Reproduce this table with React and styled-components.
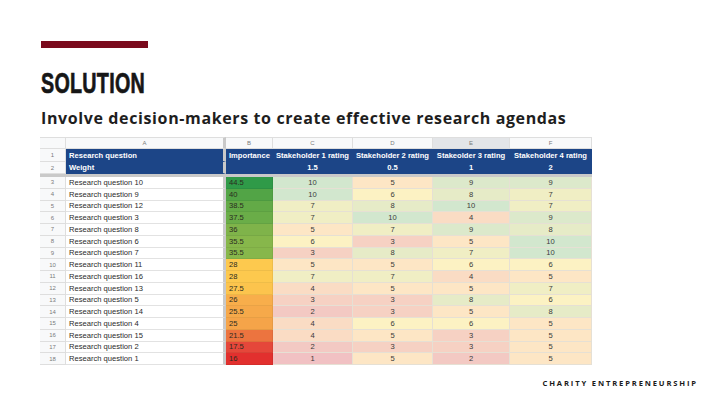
import React from "react";
import styled, { createGlobalStyle } from "styled-components";

const Global = createGlobalStyle`
  html, body { margin: 0; padding: 0; background: #ffffff; }
  body { width: 720px; height: 405px; overflow: hidden; }
`;

const Page = styled.div`
  width: 720px;
  height: 405px;
  box-sizing: border-box;
  padding: 41px 22px 0 40px;
  display: flex;
  flex-direction: column;
  background: #fff;
`;

const Bar = styled.div`
  width: 107px;
  height: 7px;
  margin-left: 1px;
  background: #7a0a1c;
`;

const Title = styled.h1`
  margin: 21px 0 0 1px;
  font-family: "Liberation Sans", sans-serif;
  font-weight: 700;
  font-size: 29px;
  line-height: 29px;
  letter-spacing: 0.4px;
  color: #161616;
  -webkit-text-stroke: 0.7px #161616;
  transform: scaleX(0.68);
  transform-origin: left center;
`;

const Subtitle = styled.h2`
  margin: 10px 0 0 1px;
  font-family: "Open Sans", sans-serif;
  font-weight: 700;
  font-size: 16px;
  line-height: 20px;
  letter-spacing: 0.62px;
  color: #1e1e1e;
`;

const Sheet = styled.div`
  margin-top: 9px;
  width: 552px;
  display: flex;
  flex-direction: column;
`;

const Row = styled.div`
  display: grid;
  box-sizing: border-box;
  grid-template-columns: 26px 160px 47px 80px 80px 77px 82px;
  height: ${(p) => p.$h}px;
  border-bottom: ${(p) => (p.$frozen ? "3px solid #c9c9c9" : "none")};
`;

const Cell = styled.div`
  box-sizing: border-box;
  min-width: 0;
  overflow: hidden;
  white-space: nowrap;
  display: flex;
  align-items: center;
  justify-content: ${(p) => (p.$align === "center" ? "center" : "flex-start")};
  padding: 0 3px;
  font-family: "Liberation Sans", Arial, sans-serif;
  font-size: 7.6px;
  font-weight: ${(p) => (p.$bold ? 700 : 400)};
  color: ${(p) => p.$color || "#2a2a2a"};
  background: ${(p) => p.$bg || "#ffffff"};
  border-right: ${(p) => (p.$sep ? "3px solid #c9c9c9" : `1px solid ${p.$line || "#e2e2e2"}`)};
  border-bottom: 1px solid ${(p) => p.$line || "#e2e2e2"};
`;

const HeadCell = styled(Cell)`
  justify-content: center;
  font-size: 6px;
  color: #7a7a7a;
  background: ${(p) => (p.$selected ? "#e3e5e8" : "#f8f9fa")};
  border-right: ${(p) => (p.$sep ? "3px solid #c9c9c9" : "1px solid #dedede")};
  border-bottom: 1px solid #dedede;
  border-top: ${(p) => (p.$top ? "1px solid #dedede" : "none")};
`;

const Footer = styled.div`
  margin-top: auto;
  margin-bottom: 17px;
  align-self: flex-end;
  font-family: "Open Sans", sans-serif;
  font-weight: 700;
  font-size: 7.6px;
  letter-spacing: 1.85px;
  color: #1a1a1a;
`;

const BLUE = "#1c4587";

const ratingColors = {
  10: "#d2e7ce",
  9: "#dce9cb",
  8: "#e6ebc7",
  7: "#f0eec4",
  6: "#fcf2c3",
  5: "#fde6c5",
  4: "#fadcc4",
  3: "#f6d1c3",
  2: "#f3c9c3",
  1: "#f1c1c3",
};

const rows = [
  ["Research question 10", "44.5", "#2f9a48", 10, 5, 9, 9],
  ["Research question 9", "40", "#52a446", 10, 6, 8, 7],
  ["Research question 12", "38.5", "#63aa47", 7, 8, 10, 7],
  ["Research question 3", "37.5", "#6aad48", 7, 10, 4, 9],
  ["Research question 8", "36", "#7fb34a", 5, 7, 9, 8],
  ["Research question 6", "35.5", "#87b74b", 6, 3, 5, 10],
  ["Research question 7", "35.5", "#87b74b", 3, 8, 7, 10],
  ["Research question 11", "28", "#fdc94e", 5, 5, 6, 6],
  ["Research question 16", "28", "#fdc94e", 7, 7, 4, 5],
  ["Research question 13", "27.5", "#fcc44d", 4, 5, 5, 7],
  ["Research question 5", "26", "#f8ae4b", 3, 3, 8, 6],
  ["Research question 14", "25.5", "#f6a94a", 2, 3, 5, 8],
  ["Research question 4", "25", "#f5a449", 4, 6, 6, 5],
  ["Research question 15", "21.5", "#ec743f", 4, 5, 3, 5],
  ["Research question 2", "17.5", "#e5473a", 2, 3, 3, 5],
  ["Research question 1", "16", "#e2302e", 1, 5, 2, 5],
];

const letters = ["A", "B", "C", "D", "E", "F"];
const stakeholders = [
  ["Stakeholder 1 rating", "1.5"],
  ["Stakeholder 2 rating", "0.5"],
  ["Stakeolder 3 rating", "1"],
  ["Stakeholder 4 rating", "2"],
];

export default function App() {
  return (
    <>
      <Global />
      <Page>
        <Bar />
        <Title>SOLUTION</Title>
        <Subtitle>Involve decision-makers to create effective research agendas</Subtitle>
        <Sheet>
          <Row $h={12}>
            <HeadCell $top />
            {letters.map((l, i) => (
              <HeadCell key={l} $top $sep={i === 0} $selected={l === "E"}>
                {l}
              </HeadCell>
            ))}
          </Row>
          <Row $h={13}>
            <HeadCell>1</HeadCell>
            <Cell $bg={BLUE} $line={BLUE} $color="#fff" $bold $sep>
              Research question
            </Cell>
            <Cell $bg={BLUE} $line={BLUE} $color="#fff" $bold>
              Importance
            </Cell>
            {stakeholders.map(([label]) => (
              <Cell key={label} $bg={BLUE} $line={BLUE} $color="#fff" $bold $align="center">
                {label}
              </Cell>
            ))}
          </Row>
          <Row $h={15} $frozen>
            <HeadCell>2</HeadCell>
            <Cell $bg={BLUE} $line={BLUE} $color="#fff" $bold $sep>
              Weight
            </Cell>
            <Cell $bg={BLUE} $line={BLUE} />
            {stakeholders.map(([label, w]) => (
              <Cell key={label} $bg={BLUE} $line={BLUE} $color="#fff" $bold $align="center">
                {w}
              </Cell>
            ))}
          </Row>
          {rows.map(([q, imp, impBg, ...ratings], i) => (
            <Row key={q} $h={11.75}>
              <HeadCell>{i + 3}</HeadCell>
              <Cell $sep>{q}</Cell>
              <Cell $bg={impBg} $line="rgba(0,0,0,0.06)" $color="#2b2b1f">
                {imp}
              </Cell>
              {ratings.map((r, j) => (
                <Cell key={j} $bg={ratingColors[r]} $line="#e6e0d4" $align="center" $color="#3a3a3a">
                  {r}
                </Cell>
              ))}
            </Row>
          ))}
        </Sheet>
        <Footer>CHARITY ENTREPRENEURSHIP</Footer>
      </Page>
    </>
  );
}
